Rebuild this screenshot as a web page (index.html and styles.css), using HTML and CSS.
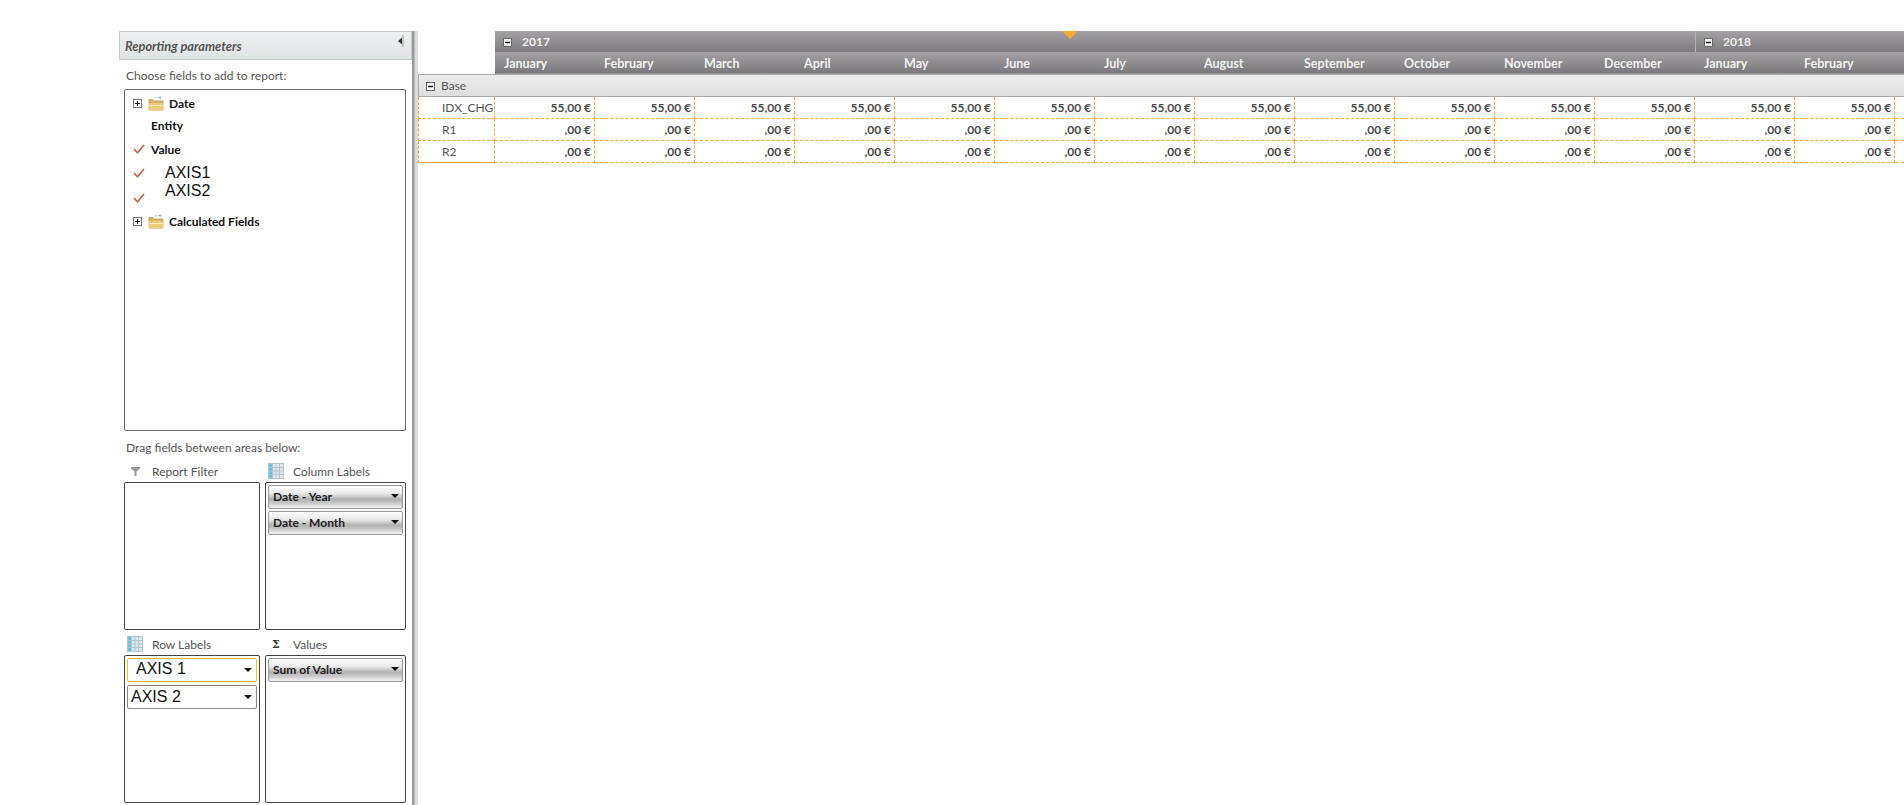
FILE: index.html
```html
<!DOCTYPE html>
<html lang="en">
<head>
    <meta charset="UTF-8">
    <title>Reporting</title>
    <link rel="stylesheet" href="styles.css">
</head>
<body>

    <!-- Shared icons -->
    <svg class="defs" width="0" height="0">
        <symbol id="plus-box" viewBox="0 0 9 9">
            <rect x="0.5" y="0.5" width="8" height="8" fill="#fff" stroke="#777"/>
            <path d="M2 4.500h5M4.500 2v5" stroke="#111" fill="none"/>
        </symbol>
        <symbol id="minus-box" viewBox="0 0 9 9">
            <rect x="0.5" y="0.5" width="8" height="8" fill="#f4f4f4" stroke="#666"/>
            <path d="M2 4.500h5" stroke="#111" stroke-width="1.400" fill="none"/>
        </symbol>
        <symbol id="folder" viewBox="0 0 16 15">
            <path d="M1 3.500h4l1 1.500h9v9H1z" fill="#dcb05f" stroke="#c99c4e" stroke-width="0.800"/>
            <path d="M5 3.500L7 1.500h6v3H6z" fill="#fff" stroke="#d8c9a4" stroke-width="0.600"/>
            <circle cx="12" cy="1.400" r="1" fill="#58b6d6"/>
            <path d="M1 7h14v7.500H1z" fill="#efcb7c"/>
            <path d="M1 9.500h14" stroke="#fbecc4"/>
        </symbol>
        <symbol id="check" viewBox="0 0 12 10">
            <path d="M1 5l3.500 3.800L11 1" fill="none" stroke="#c8623a" stroke-width="1.600"/>
        </symbol>
        <symbol id="table-icon" viewBox="0 0 16 16">
            <rect x="0.500" y="0.500" width="15" height="15" fill="#dfeaf0" stroke="#b4c4cc"/>
            <rect x="1" y="1" width="3.500" height="14" fill="#62c3ea"/>
            <path d="M1 4.500h14M1 8h14M1 11.500h14M4.500 1v14M8 1v14M11.500 1v14" stroke="#b3c3cb" fill="none"/>
        </symbol>
    </svg>

    <div class="page">
        <aside class="sidebar">
            <div class="sidebar-header">
                <span>Reporting parameters</span>
                <svg class="pin" width="6" height="12" viewBox="0 0 6 12">
                    <path d="M0 6l4-3.500v7z" fill="#333"/>
                    <path d="M5 0v12" stroke="#999" fill="none"/>
                </svg>
            </div>

            <div class="sidebar-body">
                <div class="hint hint-top">Choose fields to add to report:</div>

                <div class="tree">
                    <div class="tree-row">
                        <svg class="tree-toggle"><use href="#plus-box"/></svg>
                        <svg class="tree-folder"><use href="#folder"/></svg>
                        <span>Date</span>
                    </div>
                    <div class="tree-row">
                        <span class="tree-slot"></span>
                        <span>Entity</span>
                    </div>
                    <div class="tree-row tree-value">
                        <svg class="tree-check"><use href="#check"/></svg>
                        <span>Value</span>
                    </div>
                    <div class="tree-row tree-axis">
                        <svg class="tree-check"><use href="#check"/></svg>
                        <span>AXIS1</span>
                    </div>
                    <div class="tree-row tree-axis">
                        <svg class="tree-check check-low"><use href="#check"/></svg>
                        <span>AXIS2</span>
                    </div>
                    <div class="tree-row tree-calc">
                        <svg class="tree-toggle"><use href="#plus-box"/></svg>
                        <svg class="tree-folder"><use href="#folder"/></svg>
                        <span>Calculated Fields</span>
                    </div>
                </div>

                <div class="hint hint-drag">Drag fields between areas below:</div>

                <div class="zones">
                    <div class="zone">
                        <div class="zone-label">
                            <span class="zone-icon">
                                <svg width="9" height="9" viewBox="0 0 9 9"><path d="M0 0h9v1.500L5.500 4.500V9h-2V4.500L0 1.500z" fill="#999"/></svg>
                            </span>
                            Report Filter
                        </div>
                        <div class="zone-box"></div>
                    </div>
                    <div class="zone">
                        <div class="zone-label">
                            <span class="zone-icon">
                                <svg width="16" height="16"><use href="#table-icon"/></svg>
                            </span>
                            Column Labels
                        </div>
                        <div class="zone-box">
                            <div class="pill">Date - Year</div>
                            <div class="pill">Date - Month</div>
                        </div>
                    </div>
                    <div class="zone">
                        <div class="zone-label">
                            <span class="zone-icon">
                                <svg width="16" height="16"><use href="#table-icon"/></svg>
                            </span>
                            Row Labels
                        </div>
                        <div class="zone-box">
                            <div class="pill pill-plain pill-active">AXIS 1</div>
                            <div class="pill pill-plain">AXIS 2</div>
                        </div>
                    </div>
                    <div class="zone">
                        <div class="zone-label">
                            <span class="zone-icon sigma">Σ</span>
                            Values
                        </div>
                        <div class="zone-box">
                            <div class="pill">Sum of Value</div>
                        </div>
                    </div>
                </div>
            </div>
        </aside>

        <div class="splitter"></div>

        <main class="pivot">
            <div class="drop-marker"></div>
            <table class="pivot-table">
                <colgroup>
                    <col class="col-label">
                    <col span="14" class="col-month">
                    <col class="col-rest">
                </colgroup>
                <thead>
                    <tr class="year-row">
                        <th rowspan="2" class="corner"></th>
                        <th colspan="12"><svg class="box-icon"><use href="#minus-box"/></svg>2017</th>
                        <th colspan="3" class="year-next"><svg class="box-icon"><use href="#minus-box"/></svg>2018</th>
                    </tr>
                    <tr class="month-row">
                        <th>January</th><th>February</th><th>March</th><th>April</th>
                        <th>May</th><th>June</th><th>July</th><th>August</th>
                        <th>September</th><th>October</th><th>November</th><th>December</th>
                        <th>January</th><th>February</th><th></th>
                    </tr>
                </thead>
                <tbody>
                    <tr class="group-row">
                        <td colspan="16"><svg class="box-icon"><use href="#minus-box"/></svg>Base</td>
                    </tr>
                    <tr>
                        <td class="row-label">IDX_CHG</td>
                        <td>55,00 €</td><td>55,00 €</td><td>55,00 €</td><td>55,00 €</td>
                        <td>55,00 €</td><td>55,00 €</td><td>55,00 €</td><td>55,00 €</td>
                        <td>55,00 €</td><td>55,00 €</td><td>55,00 €</td><td>55,00 €</td>
                        <td>55,00 €</td><td>55,00 €</td><td class="cell-rest"></td>
                    </tr>
                    <tr>
                        <td class="row-label">R1</td>
                        <td>,00 €</td><td>,00 €</td><td>,00 €</td><td>,00 €</td>
                        <td>,00 €</td><td>,00 €</td><td>,00 €</td><td>,00 €</td>
                        <td>,00 €</td><td>,00 €</td><td>,00 €</td><td>,00 €</td>
                        <td>,00 €</td><td>,00 €</td><td class="cell-rest"></td>
                    </tr>
                    <tr class="last-row">
                        <td class="row-label">R2</td>
                        <td>,00 €</td><td>,00 €</td><td>,00 €</td><td>,00 €</td>
                        <td>,00 €</td><td>,00 €</td><td>,00 €</td><td>,00 €</td>
                        <td>,00 €</td><td>,00 €</td><td>,00 €</td><td>,00 €</td>
                        <td>,00 €</td><td>,00 €</td><td class="cell-rest"></td>
                    </tr>
                </tbody>
            </table>
        </main>
    </div>

</body>
</html>
```

FILE: styles.css
```css
html, body {
    margin: 0;
    height: 100%;
    overflow: hidden;
    background-color: #fff;
}

body {
    font-family: Lato, "Noto Sans", sans-serif;
    font-size: 12px;
    color: #555;
}

.defs {
    position: absolute;
}

.page {
    display: flex;
    height: 805px;
    padding: 31px 0 0 119px;
    box-sizing: border-box;
}

/* Left panel */
.sidebar {
    width: 293px;
    flex-shrink: 0;
}

.sidebar-header {
    display: flex;
    justify-content: space-between;
    height: 29px;
    box-sizing: border-box;
    padding: 5px 7px 0 5px;
    line-height: 19px;
    font-size: 12.800px;
    font-weight: bold;
    font-style: italic;
    color: #555;
    background: linear-gradient(#eef1f1, #dfe3e3);
    border: 1px solid #c5c8c8;
}

.pin {
    margin-top: -2px;
}

.sidebar-body {
    padding-left: 5px;
}

.hint {
    padding-left: 2px;
    line-height: 16px;
}

.hint-top {
    padding-top: 8px;
    padding-bottom: 5px;
}

.hint-drag {
    padding-top: 9px;
    height: 20px;
}

.tree {
    width: 282px;
    height: 342px;
    box-sizing: border-box;
    border: 1px solid #666;
    border-radius: 2px;
    padding: 2px 0 0 8px;
}

.tree-row {
    display: flex;
    align-items: center;
    height: 22px;
    font-weight: bold;
    color: #111;
}

.tree-value {
    margin-top: 2px;
    margin-bottom: 4px;
}

.tree-calc {
    margin-top: 10px;
}

.tree-axis {
    height: 18px;
    font-family: "Liberation Sans", Arial, sans-serif;
    font-size: 16px;
    font-weight: normal;
}

.tree-axis span {
    margin-left: 14px;
}

.tree-toggle {
    width: 9px;
    height: 9px;
    margin-right: 6px;
}

.tree-folder {
    width: 16px;
    height: 15px;
    margin-right: 5px;
}

.tree-slot {
    width: 18px;
}

.tree-check {
    width: 12px;
    height: 10px;
    margin-right: 6px;
    flex-shrink: 0;
}

.check-low {
    transform: translateY(7px);
}

/* Field drop areas */
.zones {
    display: grid;
    grid-template-columns: 136px 141px;
    column-gap: 5px;
    row-gap: 3px;
}

.zone-label {
    display: flex;
    align-items: center;
    height: 22px;
}

.zone-icon {
    display: flex;
    align-items: center;
    justify-content: center;
    width: 28px;
    padding-right: 6px;
    box-sizing: border-box;
    flex-shrink: 0;
}

.sigma {
    font-family: "DejaVu Serif", serif;
    font-weight: bold;
    font-size: 11px;
    color: #333;
}

.zone-box {
    height: 148px;
    box-sizing: border-box;
    border: 1px solid #444;
    border-radius: 2px;
    padding: 2px;
}

.pill {
    position: relative;
    height: 24px;
    box-sizing: border-box;
    margin-bottom: 2px;
    padding-left: 4px;
    line-height: 22px;
    font-weight: bold;
    color: #222;
    border: 1px solid #999;
    border-radius: 2px;
    background: linear-gradient(#fff, #e8e8e8 35%, #b0b0b0 60%, #c4c4c4 75%, #f2f2f2);
}

.pill::after {
    content: "";
    position: absolute;
    top: 8px;
    right: 3px;
    border-left: 4px solid transparent;
    border-right: 4px solid transparent;
    border-top: 4px solid #111;
}

.pill-plain {
    padding-left: 3px;
    font-family: "Liberation Sans", Arial, sans-serif;
    font-size: 16px;
    font-weight: normal;
    color: #111;
    background: #fff;
    border-color: #888;
}

.pill-plain::after {
    right: 4px;
    top: 9px;
}

.pill-active {
    padding-left: 8px;
    line-height: 19px;
    border-color: #f7c325;
    margin-bottom: 3px;
}

/* Drag bar between panel and pivot */
.splitter {
    width: 6px;
    height: 774px;
    flex-shrink: 0;
    background: linear-gradient(90deg, #9a9a9a 0, #9a9a9a 2px, #dcdcdc 3px, #dcdcdc 100%);
}

/* Pivot grid */
.pivot {
    position: relative;
    flex: 1;
    overflow: hidden;
}

.drop-marker {
    position: absolute;
    top: 0;
    left: 644px;
    border-left: 8px solid transparent;
    border-right: 8px solid transparent;
    border-top: 8px solid #f9a92f;
}

.pivot-table {
    table-layout: fixed;
    width: 1486px;
    border-collapse: separate;
    border-spacing: 0;
    font-size: 12px;
}

.col-label {
    width: 77px;
}

.col-month {
    width: 100px;
}

.col-rest {
    width: 9px;
}

.pivot-table th {
    padding: 0 0 0 8px;
    text-align: left;
    font-weight: bold;
    color: #f0f0f0;
    white-space: nowrap;
}

.pivot-table th.corner {
    background: #fff;
}

.year-row {
    height: 21px;
}

.year-row th {
    background: linear-gradient(#a3a1a3, #7d7b7f);
}

.year-row .year-next {
    border-left: 1px solid #b5b3b5;
}

.box-icon {
    width: 9px;
    height: 9px;
    margin-right: 10px;
    vertical-align: -1px;
}

.month-row {
    height: 22px;
}

.pivot-table .month-row th {
    padding: 2px 0 0 9px;
    font-size: 12.500px;
    background: linear-gradient(#a3a1a3, #7a787c);
    border-bottom: 1px solid #999;
    box-sizing: border-box;
}

.pivot-table td {
    height: 22px;
    box-sizing: border-box;
    padding: 0 3px 0 0;
    text-align: right;
    font-weight: bold;
    color: #4a4a4a;
    border-right: 1px dashed #f9a92f;
    border-bottom: 1px dashed #f9a92f;
    white-space: nowrap;
}

.pivot-table .cell-rest {
    padding: 0;
    border-right: none;
}

.pivot-table .group-row td {
    height: 23px;
    padding: 0 0 0 7px;
    text-align: left;
    font-weight: normal;
    color: #555;
    background: linear-gradient(#ececec, #dedede);
    border: none;
    border-top: 1px solid #aaa;
    border-bottom: 1px solid #aaa;
    border-left: 1px solid #aaa;
}

.group-row .box-icon {
    margin-right: 6px;
}

.pivot-table .row-label {
    padding-left: 23px;
    text-align: left;
    font-weight: normal;
    color: #555;
    border-left: 1px dashed #f9a92f;
}

.pivot-table .last-row .row-label {
    border-bottom: 1px solid #f9a92f;
}
```
